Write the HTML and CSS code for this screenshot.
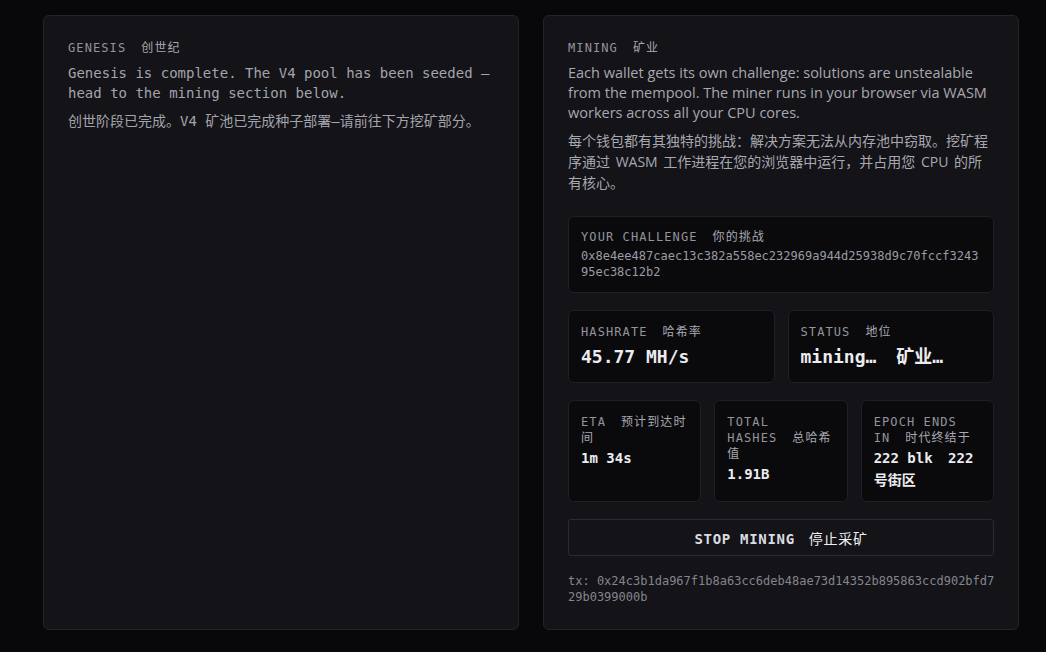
FILE: index.html
```html
<!DOCTYPE html>
<html lang="en">
<head>
  <meta charset="UTF-8" />
  <meta name="viewport" content="width=device-width, initial-scale=1.0"/>
  <title>Genesis / Mining</title>
  <link rel="stylesheet" href="styles.css">
</head>
<body>
  <div class="layout">
    <section class="panel">
      <div class="label">GENESIS<span class="zh">创世纪</span></div>
      <p class="mono-text">Genesis is complete. The V4 pool has been seeded — head to the mining section below.</p>
      <p class="mono-text zh-text">创世阶段已完成。V4 矿池已完成种子部署—请前往下方挖矿部分。</p>
    </section>

    <section class="panel">
      <div class="label">MINING<span class="zh">矿业</span></div>
      <p class="desc">Each wallet gets its own challenge: solutions are unstealable from the mempool. The miner runs in your browser via WASM workers across all your CPU cores.</p>
      <p class="desc zh-desc">每个钱包都有其独特的挑战：解决方案无法从内存池中窃取。挖矿程序通过 WASM 工作进程在您的浏览器中运行，并占用您 CPU 的所有核心。</p>

      <div class="card challenge">
        <div class="label">YOUR CHALLENGE<span class="zh">你的挑战</span></div>
        <div class="hash">0x8e4ee487caec13c382a558ec232969a944d25938d9c70fccf324395ec38c12b2</div>
      </div>

      <div class="row two">
        <div class="card">
          <div class="label">HASHRATE<span class="zh">哈希率</span></div>
          <div class="value big">45.77 MH/s</div>
        </div>
        <div class="card">
          <div class="label">STATUS<span class="zh">地位</span></div>
          <div class="value big">mining…<span class="zh">矿业…</span></div>
        </div>
      </div>

      <div class="row three">
        <div class="card">
          <div class="label">ETA<span class="zh">预计到达时间</span></div>
          <div class="value">1m 34s</div>
        </div>
        <div class="card">
          <div class="label">TOTAL<br>HASHES<span class="zh">总哈希值</span></div>
          <div class="value">1.91B</div>
        </div>
        <div class="card">
          <div class="label">EPOCH ENDS IN<span class="zh">时代终结于</span></div>
          <div class="value">222 blk<span class="zh">222 号街区</span></div>
        </div>
      </div>

      <button class="stop-btn">STOP MINING<span class="zh">停止采矿</span></button>

      <div class="tx">tx: 0x24c3b1da967f1b8a63cc6deb48ae73d14352b895863ccd902bfd729b0399000b</div>
    </section>
  </div>
</body>
</html>
```
FILE: styles.css
```css
:root {
  --page-bg: #08080b;
  --panel-bg: #131318;
  --panel-border: #23232a;
  --card-bg: #0a0a0d;
  --card-border: #1f1f25;
  --label: #93939b;
  --text: #a4a4ac;
  --value: #ececef;
  --mono: 'DejaVu Sans Mono', 'Noto Sans CJK SC', monospace;
  --sans: 'Open Sans', 'Noto Sans CJK SC', sans-serif;
}

body {
  margin: 0;
  background: var(--page-bg);
  font-family: var(--mono);
  color: var(--text);
}

.layout {
  display: grid;
  grid-template-columns: 476px 476px;
  gap: 24px;
  margin: 15px 0 0 43px;
  width: 976px;
}

.panel {
  background: var(--panel-bg);
  border: 1px solid var(--panel-border);
  border-radius: 6px;
  padding: 24px 24px 24px;
}

.label {
  font-size: 12px;
  line-height: 16px;
  letter-spacing: 1.1px;
  color: var(--label);
}

.label .zh {
  margin-left: 15px;
  color: #a8a8b0;
}

p {
  margin: 0;
}

.mono-text {
  font-size: 14px;
  line-height: 20px;
  margin-top: 7px;
}

.zh-text {
  margin-top: 8px;
}

.desc {
  font-family: var(--sans);
  font-size: 14.5px;
  line-height: 20px;
  margin-top: 7px;
  color: #a8a8b0;
}

.zh-desc {
  font-size: 14px;
  line-height: 21px;
  word-spacing: 2px;
  margin-top: 7px;
}

.card {
  background: var(--card-bg);
  border: 1px solid var(--card-border);
  border-radius: 6px;
  padding: 12px 12px 12px;
}

.challenge {
  margin-top: 23px;
  min-height: 51px;
}

.hash {
  font-size: 12px;
  line-height: 16px;
  margin-top: 3px;
  color: #9b9ba3;
  word-break: break-all;
}

.row {
  display: grid;
  gap: 13px;
  margin-top: 17px;
}

.row.two {
  grid-template-columns: 1fr 1fr;
}

.row.three {
  grid-template-columns: 1fr 1fr 1fr;
}

.row .card {
  padding-top: 13px;
}

.row.three .card {
  padding-bottom: 10px;
}

.value {
  font-size: 14px;
  line-height: 22px;
  font-weight: bold;
  color: var(--value);
  margin-top: 1px;
}

.value.big {
  font-size: 18px;
  line-height: 26px;
  margin-top: 4px;
}

.value .zh {
  margin-left: 1.1em;
}

.stop-btn {
  display: block;
  width: 100%;
  margin-top: 17px;
  height: 37px;
  background: transparent;
  border: 1px solid #2a2a31;
  border-radius: 3px;
  color: #dcdce0;
  font-family: var(--mono);
  font-size: 14px;
  font-weight: bold;
  letter-spacing: 0.7px;
}

.stop-btn .zh {
  font-weight: normal;
  margin-left: 14px;
  color: #f0f0f2;
}

.tx {
  font-size: 12px;
  line-height: 16px;
  margin-top: 17px;
  margin-right: -3px;
  color: #85858d;
  word-break: break-all;
}
```
